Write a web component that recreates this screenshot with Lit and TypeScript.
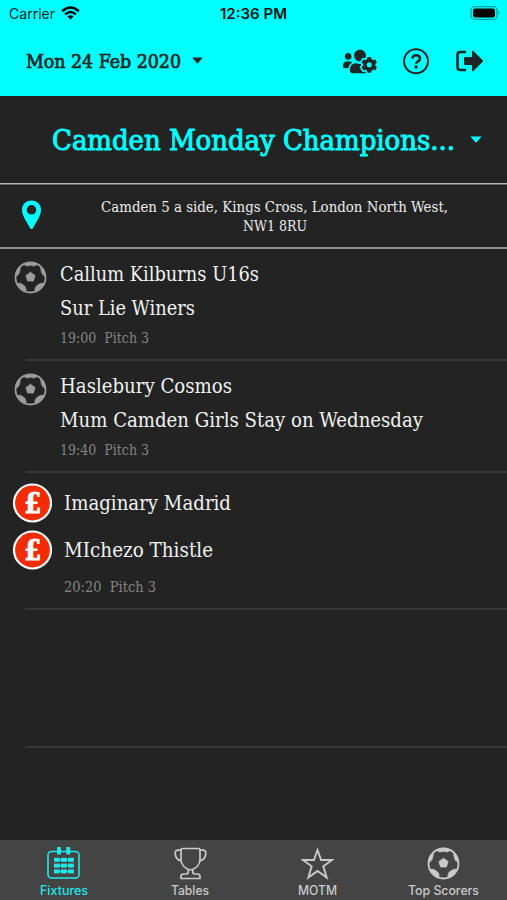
import { LitElement, html, css, svg } from "lit";
import { customElement, property } from "lit/decorators.js";

const COG_USERS =
  "M610.5 341.3c2.6-14.1 2.6-28.5 0-42.6l25.8-14.9c3-1.7 4.3-5.2 3.3-8.5-6.7-21.6-18.2-41.2-33.2-57.4-2.3-2.5-6-3.1-9-1.4l-25.8 14.9c-10.9-9.3-23.4-16.5-36.9-21.3v-29.8c0-3.4-2.4-6.4-5.7-7.1-22.3-5-45-4.8-66.2 0-3.3.7-5.7 3.7-5.7 7.1v29.8c-13.5 4.8-26 12-36.9 21.3l-25.8-14.9c-2.9-1.7-6.7-1.1-9 1.4-15 16.2-26.5 35.8-33.2 57.4-1 3.3.4 6.8 3.3 8.5l25.8 14.9c-2.6 14.1-2.6 28.5 0 42.6l-25.8 14.9c-3 1.7-4.3 5.2-3.3 8.5 6.7 21.6 18.2 41.1 33.2 57.4 2.3 2.5 6 3.1 9 1.4l25.8-14.9c10.9 9.3 23.4 16.5 36.9 21.3v29.8c0 3.4 2.4 6.4 5.7 7.1 22.3 5 45 4.8 66.2 0 3.3-.7 5.7-3.7 5.7-7.1v-29.8c13.5-4.8 26-12 36.9-21.3l25.8 14.9c2.9 1.7 6.7 1.1 9-1.4 15-16.2 26.5-35.8 33.2-57.4 1-3.3-.4-6.8-3.3-8.5l-25.8-14.9zM496 368.500c-26.8 0-48.5-21.8-48.5-48.5s21.8-48.5 48.5-48.5 48.5 21.8 48.5 48.5-21.7 48.5-48.5 48.5zM96 224c35.3 0 64-28.7 64-64s-28.7-64-64-64-64 28.7-64 64 28.7 64 64 64zm224 32c1.9 0 3.7-.5 5.6-.6 8.3-21.7 20.5-42.1 36.3-59.2 7.4-8 17.9-12.6 28.9-12.6 6.9 0 13.7 1.8 19.6 5.3l7.9 4.6c.8-.5 1.6-.9 2.4-1.4 7-14.6 11.2-30.8 11.2-48 0-61.9-50.1-112-112-112S208 82.1 208 144c0 61.9 50.1 112 112 112zm105.2 194.5c-2.3-1.2-4.6-2.6-6.8-3.9-8.2 4.8-15.3 9.8-27.5 9.8-10.9 0-21.4-4.6-28.9-12.6-18.3-19.8-32.3-43.9-40.2-69.6-10.7-34.5 24.9-49.7 25.8-50.3-.1-2.6-.1-5.2 0-7.8l-7.9-4.6c-3.8-2.2-7-5-9.8-8.1-3.3.2-6.5.6-9.8.6-24.6 0-47.6-6-68.5-16h-8.3C179.6 288 128 339.6 128 403.2V432c0 26.5 21.5 48 48 48h255.4c-3.7-6-6.2-12.8-6.2-20.3v-9.2zM173.1 274.6C161.5 263.1 145.6 256 128 256H64c-35.3 0-64 28.7-64 64v32c0 17.7 14.3 32 32 32h65.9c6.3-47.4 34.9-87.3 75.2-109.4z";

const icons = {
  ball: svg`<circle cx="16.5" cy="16.5" r="15" fill="none" stroke="currentColor" stroke-width="1.8"/>
    <g fill="currentColor" stroke="currentColor" stroke-width=".8" stroke-linejoin="round">
      <path d="M16.5 11.2l4.600 3.400-1.700 5.400h-5.800l-1.700-5.400z"/>
      <path d="M9.500 3.200Q16.500-.2 23.500 3.200L20 5 16.500 4.200 13 5z"/>
      <path d="M31.600 16L28.200 13 26.800 8.200 27.100 5.700Q31.400 10 31.600 16z"/>
      <path d="M1.400 16L4.800 13 6.200 8.200 5.900 5.700Q1.600 10 1.400 16z"/>
      <path d="M30.300 22.300L26.300 22.400 22.300 25 20.800 28.400 21.700 30.600Q27.800 28.600 30.300 22.300z"/>
      <path d="M2.700 22.300L6.700 22.400 10.700 25 12.200 28.400 11.300 30.600Q5.200 28.600 2.700 22.300z"/>
    </g>`,
  calendar: svg`<rect x="1" y="4.5" width="31" height="26.5" rx="3.5" stroke="currentColor" fill="none" stroke-width="1.6"/>
    <g fill="currentColor"><rect x="10" y="0" width="4" height="7.5" rx="1"/><rect x="19.3" y="0" width="4" height="7.5" rx="1"/>
    ${[10.8, 16.6, 22.4].map((y) => [7, 14, 21].map((x) => svg`<rect x=${x} y=${y} width="5.8" height="4"/>`))}
    <path d="M7 12.300h19v1H7zM7 18.100h19v1H7zM7 23.900h19v1H7z"/></g>`,
  trophy: svg`<g fill="none" stroke="currentColor" stroke-width="1.7" stroke-linejoin="round">
    <path d="M9 1.500h15.500c.8 0 1.500.6 1.500 1.400v9.600c0 5-4 9-9.500 10.500-5.500-1.500-9.500-5.500-9.500-10.500V2.900c0-.8.900-1.400 2-1.400z"/>
    <path d="M7 3.200H4C2 3.200 1 4.500 1.200 6.700c.3 4 3 6.800 6.300 7.200M26 3.200h3c2 0 3 1.300 2.800 3.500-.3 4-3 6.800-6.300 7.200"/>
    <path d="M14 22.500q1 3-1 4.500H9.500q-2.500 0-2.500 2.500v2h19v-2q0-2.500-2.500-2.500H20q-2-1.500-1-4.500"/></g>`,
  star: svg`<path d="M16.500 3l3.600 10h11L22.300 19.300l3.400 11.300-9.200-6.600-9.200 6.600 3.400-11.300L1.900 13h11z" fill="none" stroke="currentColor" stroke-width="1.9"/>`,
};

/** One line of text set to a fixed measure on a fixed baseline. */
@customElement("set-line")
export class SetLine extends LitElement {
  @property() text = "";
  @property({ type: Number }) width = 100;
  @property({ type: Number }) height = 20;
  @property({ type: Number }) base = 15;

  static styles = css`
    :host { display: block; flex: none; }
    svg { display: block; overflow: visible; }
    text { fill: currentColor; white-space: pre; }
  `;

  render() {
    return html`<svg width=${this.width} height=${this.height}>
      <text x="0" y=${this.base} textLength=${this.width} lengthAdjust="spacingAndGlyphs">${this.text}</text>
    </svg>`;
  }
}

interface Fixture {
  teams: [string, number][];
  time: string;
  due?: boolean;
}

const fixtures: Fixture[] = [
  { teams: [["Callum Kilburns U16s", 199], ["Sur Lie Winers", 135]], time: "19:00  Pitch 3" },
  { teams: [["Haslebury Cosmos", 172], ["Mum Camden Girls Stay on Wednesday", 363]], time: "19:40  Pitch 3" },
  { teams: [["Imaginary Madrid", 167], ["MIchezo Thistle", 149]], time: "20:20  Pitch 3", due: true },
];

const tabs: { label: string; width: number; icon: keyof typeof icons; active?: boolean }[] = [
  { label: "Fixtures", width: 48, icon: "calendar", active: true },
  { label: "Tables", width: 38, icon: "trophy" },
  { label: "MOTM", width: 39, icon: "star" },
  { label: "Top Scorers", width: 71, icon: "ball" },
];

@customElement("app-root")
export class AppRoot extends LitElement {
  static styles = css`
    :host {
      display: flex; flex-direction: column; box-sizing: border-box;
      width: 507px; height: 900px; overflow: hidden;
      background: #232323; color: #f2f2f2;
      font-family: "Roboto Slab", "DejaVu Serif Condensed", "DejaVu Serif", serif;
      font-stretch: condensed;
    }
    svg { display: block; flex: none; }
    .top { height: 96px; flex: none; background: #00ffff; color: #1f2626; }
    .status {
      display: grid; grid-template-columns: 211px auto 1fr; height: 28px;
      padding: 0 6px 0 9px; align-items: start; font-family: Inter, sans-serif; font-size: 14px;
      font-stretch: normal; color: #06292b;
    }
    .carrier { display: flex; gap: 6px; }
    .carrier svg { margin-top: 6px; color: #000; }
    .clock { font-weight: 600; color: #001416; }
    .battery { justify-self: end; margin-top: 6px; }
    .bar { display: flex; align-items: center; height: 66px; padding: 0 24px 0 26px; }
    .date { font-size: 18.5px; stroke: currentColor; stroke-width: 0.7px; }
    .caret { margin: 0 0 2px 11px; }
    .actions { display: flex; align-items: center; gap: 25.5px; margin-left: auto; }
    .league {
      display: flex; align-items: center; height: 88px; flex: none; padding-left: 52px;
      box-sizing: border-box; color: #00ffff; border-bottom: 1px solid #b4b4b4;
    }
    .title { font-size: 27.5px; stroke: currentColor; stroke-width: 0.9px; }
    .league .caret { margin: 0 0 0 15px; }
    .venue {
      display: flex; align-items: center; height: 65px; flex: none; box-sizing: border-box;
      border-bottom: 2px solid #8f8f8f; border-top: 1px solid #6a6a6a; padding-left: 21px; color: #00ffff;
    }
    .venue > svg { margin-top: -2px; }
    .address {
      display: flex; flex-direction: column; align-items: center; margin-left: 60px;
      color: #ececec; font-size: 14.5px;
    }
    .fixture, .blank { position: relative; box-sizing: border-box; }
    .list { flex: 1; }
    .fixture { display: flex; padding: 10px 0 0 14px; height: 112px; }
    .fixture.due { padding: 7px 0 0 12px; height: 137px; }
    .fixture::after, .blank::after {
      content: ""; position: absolute; left: 25px; right: 0; bottom: 0; height: 2px; background: #373737;
    }
    .blank { height: 138px; }
    .marker { color: #9b9b9b; margin-top: 2px; }
    .lines { margin: -1px 0 0 12.5px; }
    .team { display: flex; align-items: center; font-size: 19.5px; }
    .due .team { gap: 12px; height: 46.5px; }
    .meta { font-size: 14.5px; color: #858585; }
    .due .meta { margin-left: 52px; }
    .tabs {
      display: grid; grid-template-columns: repeat(4, 1fr); height: 60px; flex: none;
      padding-left: 0.5px; background: #444; color: #c9c9c9;
      font-family: Inter, sans-serif; font-stretch: normal; font-size: 12.5px;
    }
    .tab { display: flex; flex-direction: column; align-items: center; padding-top: 7px; font-weight: 500; }
    .tab.active { color: #1fe9ec; }
    .pound {
      font-size: 27px; font-weight: 700; font-family: "DejaVu Serif", serif; font-stretch: normal;
      stroke: #fff; stroke-width: 0.9px;
    }
  `;

  private caret(width: number) {
    return html`<svg class="caret" width=${width} height="7" viewBox="0 0 12 7" preserveAspectRatio="none"><path d="M.3.5h11.400L6 6.800z" fill="currentColor"/></svg>`;
  }

  private coin() {
    return html`<svg width="40" height="40" viewBox="0 0 40 40">
      <circle cx="20.5" cy="20" r="18.500" fill="#f32c05" stroke="#fff" stroke-width="2.200"/>
      <text class="pound" x="12.3" y="30" textLength="17" lengthAdjust="spacingAndGlyphs" fill="#fff">£</text></svg>`;
  }

  private fixture(f: Fixture) {
    return html`<div class="fixture ${f.due ? "due" : ""}">
      ${f.due ? "" : html`<svg class="marker" width="33" height="33" viewBox="0 0 33 33">${icons.ball}</svg>`}
      <div class="${f.due ? "" : "lines"}">
        ${f.teams.map(([name, w]) => html`<div class="team">
          ${f.due ? this.coin() : ""}
          <set-line .text=${name} .width=${w} .height=${f.due ? 40 : 33.5} .base=${f.due ? 27 : 23}></set-line>
        </div>`)}
        <set-line class="meta" .text=${f.time} .width=${f.due ? 92 : 89} .height=${24} .base=${f.due ? 19 : 18}></set-line>
      </div>
    </div>`;
  }

  render() {
    return html`
      <header class="top">
        <div class="status">
          <div class="carrier">
            <set-line text="Carrier" .width=${46} .height=${28} .base=${19}></set-line>
            <svg width="19" height="14" viewBox="0 0 19 14" fill="none" stroke="currentColor" stroke-width="2.5">
              <path d="M1.200 5.200Q9.500-2.200 17.800 5.200M4.200 8.300q5.300-4.600 10.600 0"/>
              <path d="M6.500 10.500q3-2.400 6 0l-3 3z" fill="currentColor" stroke="none"/></svg>
          </div>
          <set-line class="clock" text="12:36 PM" .width=${67} .height=${28} .base=${19}></set-line>
          <svg class="battery" width="31" height="14" viewBox="0 0 31 14">
            <rect x="1" y=".7" width="26" height="12.600" rx="3.500" fill="none" stroke="#00a3a3" stroke-width="1.300"/>
            <rect x="3" y="2.500" width="22" height="9" rx="2" fill="#000"/>
            <path d="M28.500 4.500q2 2.500 0 5z" fill="#00a3a3"/></svg>
        </div>
        <div class="bar">
          <set-line class="date" text="Mon 24 Feb 2020" .width=${155} .height=${66} .base=${40}></set-line>
          ${this.caret(11)}
          <div class="actions">
            <svg width="34" height="27" viewBox="0 0 640 512"><path d=${COG_USERS} fill="currentColor"/></svg>
            <svg width="27" height="27" viewBox="0 0 27 27" fill="none" stroke="currentColor">
              <circle cx="13" cy="13.200" r="12" stroke-width="2"/>
              <path d="M9.200 10.600c.4-2.400 2-3.400 3.900-3.400 2.200 0 3.900 1.300 3.900 3.200 0 2.900-3.800 2.800-3.800 5.400" stroke-width="2.600"/>
              <circle cx="13.100" cy="19" r="1.700" fill="currentColor" stroke="none"/></svg>
            <svg width="28" height="22" viewBox="0 0 28 22">
              <path d="M11 2H5.500Q2.500 2 2.500 5v12q0 3 3 3H11" fill="none" stroke="currentColor" stroke-width="2.600"/>
              <path d="M10 7h7V1.700q0-1.700 1.400-.6l9.300 9.100q.9.800 0 1.600l-9.300 9.100q-1.400 1.100-1.400-.6V15h-7q-1 0-1-1V8q0-1 1-1z" fill="currentColor"/></svg>
          </div>
        </div>
      </header>
      <section class="league">
        <set-line class="title" text="Camden Monday Champions..." .width=${403} .height=${86} .base=${52.5}></set-line>
        ${this.caret(12)}
      </section>
      <section class="venue">
        <svg width="20" height="30" viewBox="0 0 20 30"><path fill="currentColor" fill-rule="evenodd" d="M10.500.5c5.500 0 9.500 4 9.500 9.200 0 6.300-5 12-8 18.300q-1.500 2.400-3 0C6 21.700 1 16 1 9.700 1 4.500 5 .5 10.500.5zm0 4.500a4.800 4.800 0 1 0 0 9.600 4.800 4.800 0 0 0 0-9.600z"/></svg>
        <div class="address">
          <set-line text="Camden 5 a side, Kings Cross, London North West," .width=${347} .height=${19} .base=${15}></set-line>
          <set-line text="NW1 8RU" .width=${64} .height=${19} .base=${15}></set-line>
        </div>
      </section>
      <main class="list">
        ${fixtures.map((f) => this.fixture(f))}
        <div class="blank"></div>
      </main>
      <nav class="tabs">
        ${tabs.map((t) => html`<div class="tab ${t.active ? "active" : ""}">
          <svg width="33" height="33" viewBox="0 0 33 33">${icons[t.icon]}</svg>
          <set-line .text=${t.label} .width=${t.width} .height=${20} .base=${15}></set-line>
        </div>`)}
      </nav>
    `;
  }
}
